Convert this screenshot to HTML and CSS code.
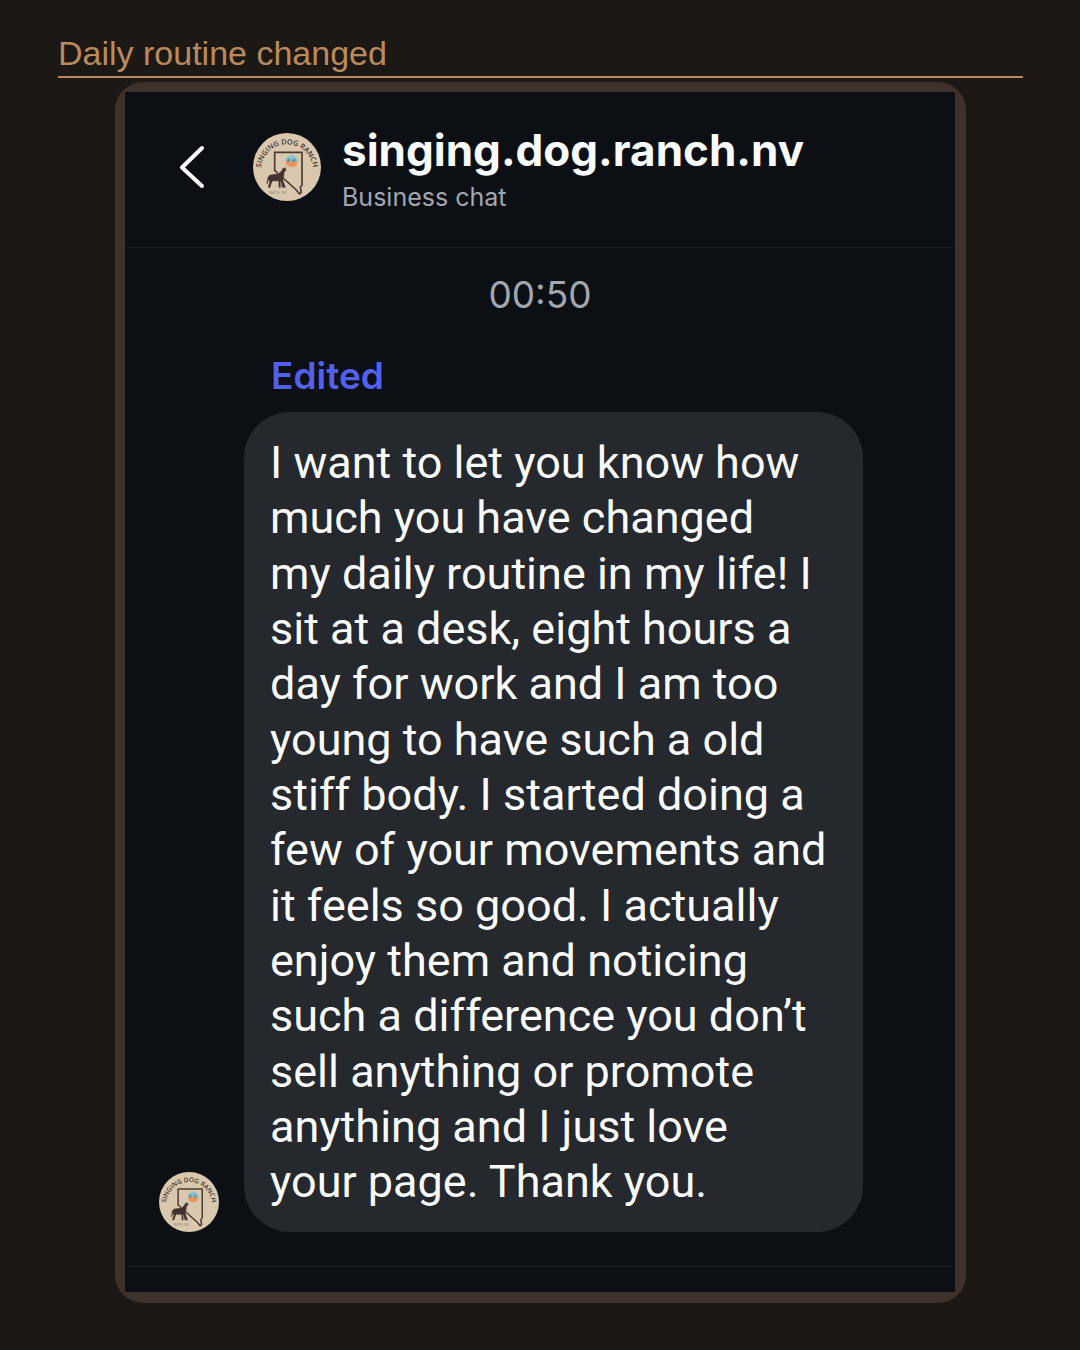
FILE: index.html
```html
<!DOCTYPE html>
<html lang="en">
<head>
<meta charset="utf-8">
<meta name="viewport" content="width=device-width, initial-scale=1">
<title>Daily routine changed</title>
<link rel="stylesheet" href="styles.css">
</head>
<body>
<svg class="sprite" aria-hidden="true">
  <defs>
    <path id="arc" d="M62 149A78 78 0 1 1 218 149"/>
    <symbol id="ranch" viewBox="38 37 204 204">
      <circle cx="140" cy="139" r="102" fill="#d9c8ae"/>
      <text class="logo-name"><textPath href="#arc" startOffset="50%" text-anchor="middle">SINGING DOG RANCH</textPath></text>
      <path d="M103 95H185V193L180 200L183 215L178 220L168 208L103 149Z" fill="none" stroke="#4b3a33" stroke-width="5"/>
      <circle cx="154" cy="121" r="18" fill="#8dc4cf"/>
      <path d="M136 122C145 118 160 127 172 122A18 18 0 0 1 136 122Z" fill="#e9955c"/>
      <path d="M144 125V112M140 116V120H148V115M160 126V112M156 117V121H165V115" fill="none" stroke="#53796f" stroke-width="2"/>
      <path d="M138 139L132 142L128 141L124 149L116 158L88 162L82 170L78 188L82 190L85 178L87 184L83 197V201H91L92 193L97 182L114 182L115 201H122L121 183L125 201H137L129 180L132 161L133 153L139 149L136 146Z" fill="#42332f" stroke="#d9c8ae" stroke-width="1"/>
      <text class="logo-place" x="112" y="219" text-anchor="middle">SMITH, NV</text>
    </symbol>
  </defs>
</svg>
<main class="page">
  <h1 class="title">Daily routine changed</h1>
  <div class="frame">
    <section class="chat">
      <header class="chat-header">
        <button class="back" type="button" aria-label="Back">
          <svg class="back-icon" viewBox="0 0 28 46" aria-hidden="true"><path d="M24 4L4 23.500L24 42"/></svg>
        </button>
        <svg class="avatar" role="img" aria-label="Singing Dog Ranch"><use href="#ranch"/></svg>
        <div class="contact">
          <h2 class="name">singing.dog.ranch.nv</h2>
          <p class="kind">Business chat</p>
        </div>
      </header>
      <div class="thread">
        <time class="time">00:50</time>
        <p class="edited">Edited</p>
        <div class="message">
          <svg class="avatar avatar-small" role="img" aria-label="Singing Dog Ranch"><use href="#ranch"/></svg>
          <p class="bubble">I want to let you know how<br>
            much you have changed<br>
            my daily routine in my life! I<br>
            sit at a desk, eight hours a<br>
            day for work and I am too<br>
            young to have such a old<br>
            stiff body. I started doing a<br>
            few of your movements and<br>
            it feels so good. I actually<br>
            enjoy them and noticing<br>
            such a difference you don’t<br>
            sell anything or promote<br>
            anything and I just love<br>
            your page. Thank you.</p>
        </div>
      </div>
      <footer class="chat-footer"></footer>
    </section>
  </div>
</main>
</body>
</html>
```
FILE: styles.css
```css
* {
  box-sizing: border-box;
}

body {
  margin: 0;
  background: #1c1815;
  color: #f9fafa;
  font-family: Inter, "Liberation Sans", sans-serif;
}

h1, h2, p {
  margin: 0;
}

.sprite {
  position: absolute;
  width: 0;
  height: 0;
}

.page {
  padding: 34px 57px 47px 58px;
}

.title {
  padding-bottom: 4px;
  border-bottom: 2px solid #b98b5c;
  color: #b98b5c;
  font: 400 34px/38px "Liberation Sans", Arial, sans-serif;
}

.frame {
  margin: 4px 57px 0;
  padding: 10px 11px 11px 10px;
  border-radius: 28px;
  background: #3e322b;
}

.chat {
  background: #0c0f14;
}

.chat-header {
  display: flex;
  align-items: center;
  height: 156px;
  padding: 0 49px 6px;
  border-bottom: 1px solid #1b1e22;
}

.back {
  display: flex;
  padding: 0 4px;
  border: 0;
  background: none;
  cursor: pointer;
}

.back-icon {
  width: 28px;
  height: 46px;
  fill: none;
  stroke: #f9fafa;
  stroke-width: 4;
  stroke-linecap: round;
  stroke-linejoin: round;
}

.avatar {
  flex: none;
  width: 68px;
  height: 68px;
  margin-left: 43px;
}

.avatar-small {
  width: 60px;
  height: 60px;
  margin: 0;
}

.logo-name {
  fill: #42332f;
  font: 600 22px "Open Sans", sans-serif;
}

.logo-place {
  fill: #8b7a69;
  font: 400 11px "Open Sans", sans-serif;
}

.contact {
  padding-top: 5px;
  margin-left: 21px;
}

.name {
  font-size: 44px;
  font-weight: 700;
  line-height: 56px;
}

.kind {
  color: #a2a7af;
  font-size: 25px;
  line-height: 38px;
}

.thread {
  padding: 23px 92px 34px 34px;
}

.time {
  display: block;
  margin-right: -58px;
  color: #a2a7af;
  font-size: 37px;
  line-height: 48px;
  text-align: center;
}

.edited {
  margin: 33px 0 12px 112px;
  color: #5261ec;
  font-size: 37px;
  font-weight: 600;
  line-height: 48px;
}

.message {
  display: flex;
  align-items: flex-end;
  gap: 25px;
}

.bubble {
  flex: 1;
  padding: 23px 26px 22px;
  border-radius: 46px;
  background: #25282d;
  font-family: Roboto, "Liberation Sans", sans-serif;
  font-size: 45px;
  line-height: 1.23;
}

.chat-footer {
  height: 26px;
  border-top: 1px solid #1b1e22;
}
```
